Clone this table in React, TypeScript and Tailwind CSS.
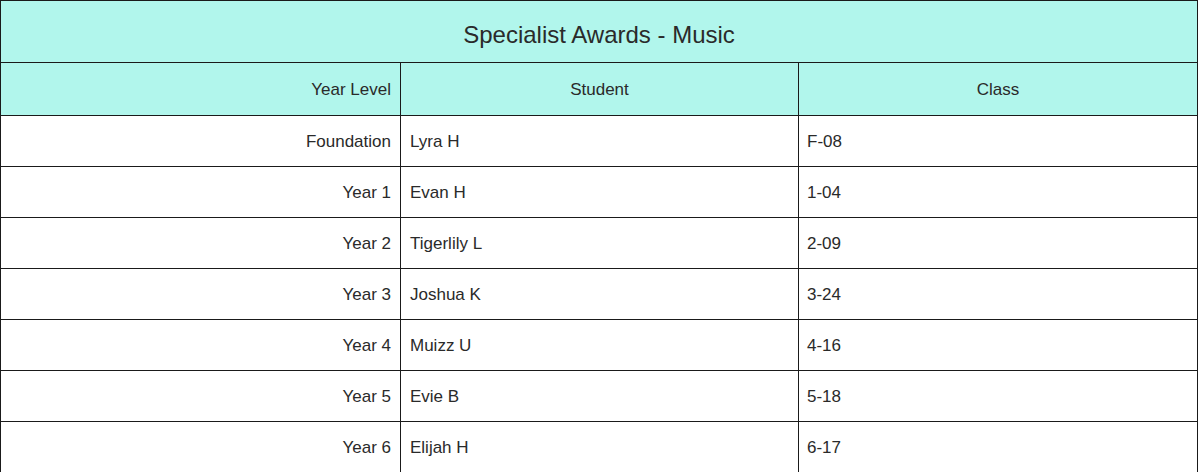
import React from "react";

const rows = [
  ["Foundation", "Lyra H", "F-08"],
  ["Year 1", "Evan H", "1-04"],
  ["Year 2", "Tigerlily L", "2-09"],
  ["Year 3", "Joshua K", "3-24"],
  ["Year 4", "Muizz U", "4-16"],
  ["Year 5", "Evie B", "5-18"],
  ["Year 6", "Elijah H", "6-17"],
];

export default function App() {
  return (
    <div className="w-[1200px] h-[472px] overflow-hidden bg-white" style={{ fontFamily: '"Liberation Sans", Arial, sans-serif' }}>
      <div className="w-[1198px] border border-[#1a1a1a] text-[#2a2a2a]">
        <div className="h-[62px] bg-[#b1f6ec] border-b border-[#1a1a1a] flex items-center justify-center pt-[6px] text-[24px]">
          Specialist Awards - Music
        </div>
        <div className="grid grid-cols-[400px_398px_1fr] h-[53px] bg-[#b1f6ec] border-b border-[#1a1a1a] text-[17px]">
          <div className="border-r border-[#1a1a1a] flex items-center justify-end pr-[9px] pt-[1px]">Year Level</div>
          <div className="border-r border-[#1a1a1a] flex items-center justify-center pt-[1px]">Student</div>
          <div className="flex items-center justify-center pt-[1px]">Class</div>
        </div>
        {rows.map((r) => (
          <div key={r[0]} className="grid grid-cols-[400px_398px_1fr] h-[51px] border-b border-[#1a1a1a] text-[17px]">
            <div className="border-r border-[#1a1a1a] flex items-center justify-end pr-[9px] pt-[1px]">{r[0]}</div>
            <div className="border-r border-[#1a1a1a] flex items-center pl-[9px] pt-[1px]">{r[1]}</div>
            <div className="flex items-center pl-[8px] pt-[1px]">{r[2]}</div>
          </div>
        ))}
      </div>
    </div>
  );
}
